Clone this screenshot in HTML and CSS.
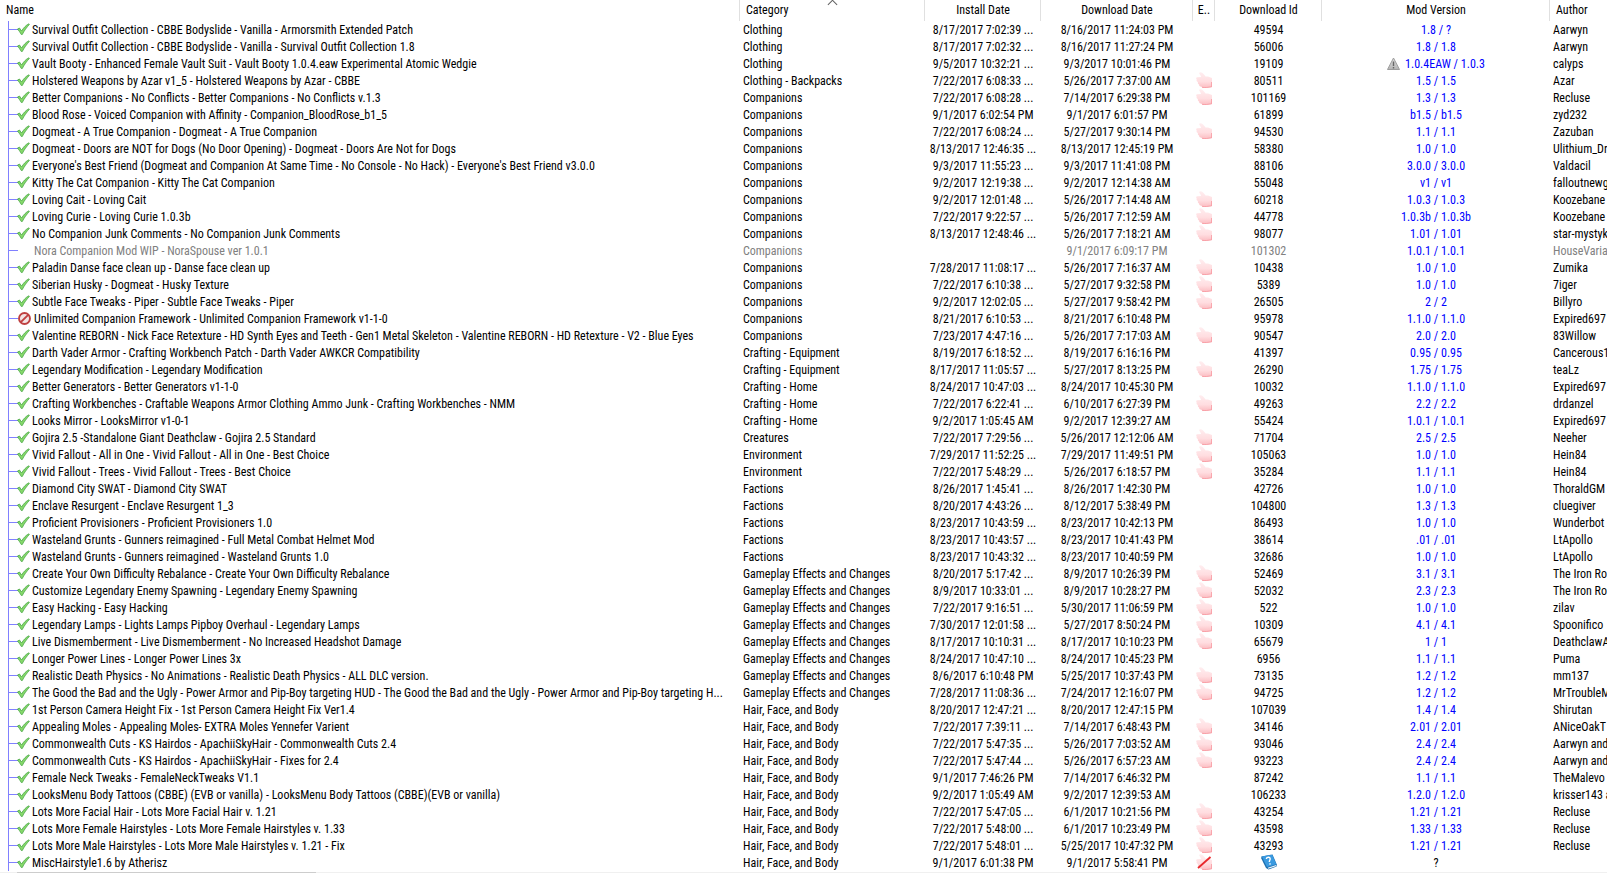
FILE: index.html
```
<!doctype html>
<html lang="en">
<head>
  <meta charset="UTF-8" />
  <meta name="viewport" content="width=device-width, initial-scale=1.0" />
  <title>Mods</title>
  <link rel="stylesheet" href="styles.css">
</head>
<body>

<svg class="sprite" aria-hidden="true">
  <defs>
    <linearGradient id="pink" x1="0" y1="0" x2="0" y2="1">
      <stop offset="0" stop-color="#ffeef0" />
      <stop offset="0.6" stop-color="#ffdde0" />
      <stop offset="1" stop-color="#fbbcc1" />
    </linearGradient>
    <linearGradient id="grey" x1="0" y1="0" x2="0" y2="1">
      <stop offset="0" stop-color="#e0e0e0" />
      <stop offset="1" stop-color="#b4b4b4" />
    </linearGradient>
  </defs>
  <symbol id="check" viewBox="0 0 13 13">
    <path d="M0.500,6 L2.500,5 L4.500,8 C6.500,5 9,2 12,0.800 L12.500,1.300 C10,4 7,8 5.300,11.500 L4.300,11.500 C3.300,9.500 2,8 0.500,6 z" fill="#86d86a" stroke="#3c9f3c" stroke-width="0.7" stroke-linejoin="round" />
  </symbol>
  <symbol id="ban" viewBox="0 0 13 13">
    <circle cx="6.500" cy="6.500" r="5.500" fill="#f3e4e4" stroke="#bf4040" stroke-width="1.900" />
    <path d="M2.800,10.200 L10.200,2.800" stroke="#bf4040" stroke-width="1.900" />
  </symbol>
  <symbol id="thumb" viewBox="0 0 16 16">
    <path d="M3,1 C3.500,0 5.500,0 6.500,1 C8,2.500 9,3.500 9.500,4.500 L12,4.500 L16,6 L16,15 L12,15.500 C9,16.200 6,16 5,14.500 C3.500,14.500 3,13.500 3.200,12.500 C2,12 1.500,11 2,10 C0.500,9.500 0.300,8.500 0.800,7.700 C-0.300,6.500 0.300,5.300 1.500,5.300 L5,5 C5,3.500 3.500,2.500 3,1 z" fill="url(#pink)" />
    <path d="M6,15.300 C9,16 12,15.300 15.600,14.800 L15.600,10" fill="none" stroke="#f8959d" stroke-width="0.8" />
  </symbol>
  <symbol id="nothumb" viewBox="0 0 16 16">
    <use href="#thumb" />
    <path d="M2,14 L14.500,3" stroke="#e8282c" stroke-width="1.800" />
  </symbol>
  <symbol id="warn" viewBox="0 0 13 13">
    <path d="M6.500,1 L12.500,12.500 L0.500,12.500 z" fill="url(#grey)" stroke="#9c9c9c" stroke-linejoin="round" />
    <path d="M6.500,4.500 L6.500,9 M6.500,10 L6.500,11.500" stroke="#666" stroke-width="1.400" />
  </symbol>
  <symbol id="book" viewBox="0 0 16 16">
    <path d="M0.300,2.500 L11.500,0.500 L16,11 L15.500,12.500 L7.500,15.500 L5,14 L0.300,4.500 z" fill="#1c6fb0" />
    <path d="M0.800,2.500 L11.200,0.800 L15.300,10.300 L6,13 z" fill="#3a9ae0" />
    <path d="M7,14.300 L15.300,11.500" stroke="#eef6fc" stroke-width="1.200" />
    <path d="M5.300,5 C5.500,2.800 9,2.600 9.200,4.700 C9.300,6 8.100,6.300 8.400,8 M8.800,9.300 L9.200,10.600" fill="none" stroke="#fff" stroke-width="1.400" />
  </symbol>
</svg>

<table class="mods">
  <colgroup>
    <col class="col-name"><col class="col-cat"><col class="col-inst"><col class="col-down">
    <col class="col-end"><col class="col-id"><col class="col-ver"><col class="col-auth">
  </colgroup>
  <thead>
    <tr>
      <th>Name</th>
      <th class="sorted">Category</th>
      <th class="mid">Install Date</th>
      <th class="mid">Download Date</th>
      <th class="mid">E..</th>
      <th class="mid">Download Id</th>
      <th class="mid">Mod Version</th>
      <th>Author</th>
    </tr>
  </thead>
  <tbody id="list"></tbody>
</table>
<div class="scroll"><div class="scroll-thumb"></div></div>

<script src="mods.js"></script>
</body>
</html>
```
FILE: styles.css
```
* {
  box-sizing: border-box;
}
body {
  margin: 0;
  background: #fff;
  color: #000;
  font: 12px/15px "Roboto Condensed", Roboto, sans-serif;
  overflow: hidden;
}
.sprite {
  position: absolute;
  width: 0;
  height: 0;
}
.mods {
  width: 100%;
  table-layout: fixed;
  border-collapse: collapse;
}
.col-cat { width: 185px; }
.col-inst { width: 116px; }
.col-down { width: 152px; }
.col-end { width: 22px; }
.col-id { width: 107px; }
.col-ver { width: 228px; }
.col-auth { width: 57px; }
th {
  position: relative;
  height: 21px;
  padding: 0 0 0 6px;
  font-weight: normal;
  text-align: left;
  white-space: nowrap;
  background: linear-gradient(#e0e0e0, #e0e0e0) right / 1px 100% no-repeat;
}
th:last-child {
  background: none;
}
th.mid {
  padding-left: 0;
  text-align: center;
}
/*Sort arrow*/
.sorted:after {
  content: '';
  position: absolute;
  top: 1px;
  left: 48%;
  width: 6px;
  height: 6px;
  border: solid #606060;
  border-width: 1px 0 0 1px;
  transform: rotate(45deg);
}
td {
  height: 17px;
  padding: 2px 0 0 3px;
  overflow: hidden;
  white-space: nowrap;
}
td.mid {
  padding-left: 0;
  text-align: center;
}
/*Tree lines*/
td.name {
  padding: 2px 3px 0 17px;
  text-overflow: ellipsis;
  background:
    linear-gradient(#8080ff, #8080ff) 8px 0 / 1px 100% no-repeat,
    linear-gradient(#8080ff, #8080ff) 8px 8px / 10px 1px no-repeat;
}
td svg {
  display: inline-block;
  vertical-align: top;
}
.check {
  width: 13px;
  height: 13px;
  margin-right: 2px;
}
.ban {
  width: 13px;
  height: 13px;
  margin: 0 3px 0 1px;
}
.none {
  display: inline-block;
  width: 17px;
}
.thumb,
.nothumb,
.book {
  width: 16px;
  height: 16px;
  margin-top: -2px;
}
.warn {
  width: 13px;
  height: 13px;
  margin-right: 5px;
}
.ver {
  color: #00f;
}
.unknown {
  color: #000;
}
.off {
  color: #808080;
}
.scroll {
  height: 2px;
  padding-top: 1px;
  background: #f0f0f0 content-box;
}
.scroll-thumb {
  width: 299px;
  height: 1px;
  margin-left: 17px;
  background: #cdcdcd;
}
```
FILE: mods.js
```
"use strict";
// name | category | installed | downloaded | endorsed | id | version | author
var mods = `Survival Outfit Collection - CBBE Bodyslide - Vanilla - Armorsmith Extended Patch|Clothing|8/17/2017 7:02:39 ...|8/16/2017 11:24:03 PM||49594|1.8 / ?|Aarwyn
Survival Outfit Collection - CBBE Bodyslide - Vanilla - Survival Outfit Collection 1.8|Clothing|8/17/2017 7:02:32 ...|8/16/2017 11:27:24 PM||56006|1.8 / 1.8|Aarwyn
Vault Booty - Enhanced Female Vault Suit - Vault Booty 1.0.4.eaw Experimental Atomic Wedgie|Clothing|9/5/2017 10:32:21 ...|9/3/2017 10:01:46 PM||19109|1.0.4EAW / 1.0.3|calyps
Holstered Weapons by Azar v1_5 - Holstered Weapons by Azar - CBBE|Clothing - Backpacks|7/22/2017 6:08:33 ...|5/26/2017 7:37:00 AM|y|80511|1.5 / 1.5|Azar
Better Companions - No Conflicts - Better Companions - No Conflicts v.1.3|Companions|7/22/2017 6:08:28 ...|7/14/2017 6:29:38 PM|y|101169|1.3 / 1.3|Recluse
Blood Rose - Voiced Companion with Affinity - Companion_BloodRose_b1_5|Companions|9/1/2017 6:02:54 PM|9/1/2017 6:01:57 PM||61899|b1.5 / b1.5|zyd232
Dogmeat - A True Companion - Dogmeat - A True Companion|Companions|7/22/2017 6:08:24 ...|5/27/2017 9:30:14 PM|y|94530|1.1 / 1.1|Zazuban
Dogmeat - Doors are NOT for Dogs (No Door Opening) - Dogmeat - Doors Are Not for Dogs|Companions|8/13/2017 12:46:35 ...|8/13/2017 12:45:19 PM||58380|1.0 / 1.0|Ulithium_Dr
Everyone's Best Friend (Dogmeat and Companion At Same Time - No Console - No Hack) - Everyone's Best Friend v3.0.0|Companions|9/3/2017 11:55:23 ...|9/3/2017 11:41:08 PM||88106|3.0.0 / 3.0.0|Valdacil
Kitty The Cat Companion - Kitty The Cat Companion|Companions|9/2/2017 12:19:38 ...|9/2/2017 12:14:38 AM||55048|v1 / v1|falloutnewg
Loving Cait - Loving Cait|Companions|9/2/2017 12:01:48 ...|5/26/2017 7:14:48 AM|y|60218|1.0.3 / 1.0.3|Koozebane
Loving Curie - Loving Curie 1.0.3b|Companions|7/22/2017 9:22:57 ...|5/26/2017 7:12:59 AM|y|44778|1.0.3b / 1.0.3b|Koozebane
No Companion Junk Comments - No Companion Junk Comments|Companions|8/13/2017 12:48:46 ...|5/26/2017 7:18:21 AM|y|98077|1.01 / 1.01|star-mystyk
Nora Companion Mod WIP - NoraSpouse ver 1.0.1|Companions||9/1/2017 6:09:17 PM||101302|1.0.1 / 1.0.1|HouseVaria
Paladin Danse face clean up - Danse face clean up|Companions|7/28/2017 11:08:17 ...|5/26/2017 7:16:37 AM|y|10438|1.0 / 1.0|Zumika
Siberian Husky - Dogmeat - Husky Texture|Companions|7/22/2017 6:10:38 ...|5/27/2017 9:32:58 PM|y|5389|1.0 / 1.0|7iger
Subtle Face Tweaks - Piper - Subtle Face Tweaks - Piper|Companions|9/2/2017 12:02:05 ...|5/27/2017 9:58:42 PM|y|26505|2 / 2|Billyro
Unlimited Companion Framework - Unlimited Companion Framework v1-1-0|Companions|8/21/2017 6:10:53 ...|8/21/2017 6:10:48 PM||95978|1.1.0 / 1.1.0|Expired697
Valentine REBORN - Nick Face Retexture - HD Synth Eyes and Teeth - Gen1 Metal Skeleton - Valentine REBORN - HD Retexture - V2 - Blue Eyes|Companions|7/23/2017 4:47:16 ...|5/26/2017 7:17:03 AM|y|90547|2.0 / 2.0|83Willow
Darth Vader Armor - Crafting Workbench Patch - Darth Vader AWKCR Compatibility|Crafting - Equipment|8/19/2017 6:18:52 ...|8/19/2017 6:16:16 PM||41397|0.95 / 0.95|Cancerous1
Legendary Modification - Legendary Modification|Crafting - Equipment|8/17/2017 11:05:57 ...|5/27/2017 8:13:25 PM|y|26290|1.75 / 1.75|teaLz
Better Generators - Better Generators v1-1-0|Crafting - Home|8/24/2017 10:47:03 ...|8/24/2017 10:45:30 PM||10032|1.1.0 / 1.1.0|Expired697
Crafting Workbenches - Craftable Weapons Armor Clothing Ammo Junk - Crafting Workbenches - NMM|Crafting - Home|7/22/2017 6:22:41 ...|6/10/2017 6:27:39 PM|y|49263|2.2 / 2.2|drdanzel
Looks Mirror - LooksMirror v1-0-1|Crafting - Home|9/2/2017 1:05:45 AM|9/2/2017 12:39:27 AM||55424|1.0.1 / 1.0.1|Expired697
Gojira 2.5 -Standalone Giant Deathclaw - Gojira 2.5 Standard|Creatures|7/22/2017 7:29:56 ...|5/26/2017 12:12:06 AM|y|71704|2.5 / 2.5|Neeher
Vivid Fallout - All in One - Vivid Fallout - All in One - Best Choice|Environment|7/29/2017 11:52:25 ...|7/29/2017 11:49:51 PM|y|105063|1.0 / 1.0|Hein84
Vivid Fallout - Trees - Vivid Fallout - Trees - Best Choice|Environment|7/22/2017 5:48:29 ...|5/26/2017 6:18:57 PM|y|35284|1.1 / 1.1|Hein84
Diamond City SWAT - Diamond City SWAT|Factions|8/26/2017 1:45:41 ...|8/26/2017 1:42:30 PM||42726|1.0 / 1.0|ThoraldGM
Enclave Resurgent - Enclave Resurgent 1_3|Factions|8/20/2017 4:43:26 ...|8/12/2017 5:38:49 PM||104800|1.3 / 1.3|cluegiver
Proficient Provisioners - Proficient Provisioners 1.0|Factions|8/23/2017 10:43:59 ...|8/23/2017 10:42:13 PM||86493|1.0 / 1.0|Wunderbot
Wasteland Grunts - Gunners reimagined - Full Metal Combat Helmet Mod|Factions|8/23/2017 10:43:57 ...|8/23/2017 10:41:43 PM||38614|.01 / .01|LtApollo
Wasteland Grunts - Gunners reimagined - Wasteland Grunts 1.0|Factions|8/23/2017 10:43:32 ...|8/23/2017 10:40:59 PM||32686|1.0 / 1.0|LtApollo
Create Your Own Difficulty Rebalance - Create Your Own Difficulty Rebalance|Gameplay Effects and Changes|8/20/2017 5:17:42 ...|8/9/2017 10:26:39 PM|y|52469|3.1 / 3.1|The Iron Ro
Customize Legendary Enemy Spawning - Legendary Enemy Spawning|Gameplay Effects and Changes|8/9/2017 10:33:01 ...|8/9/2017 10:28:27 PM|y|52032|2.3 / 2.3|The Iron Ro
Easy Hacking - Easy Hacking|Gameplay Effects and Changes|7/22/2017 9:16:51 ...|5/30/2017 11:06:59 PM|y|522|1.0 / 1.0|zilav
Legendary Lamps - Lights Lamps Pipboy Overhaul - Legendary Lamps|Gameplay Effects and Changes|7/30/2017 12:01:58 ...|5/27/2017 8:50:24 PM|y|10309|4.1 / 4.1|Spoonifico
Live Dismemberment - Live Dismemberment - No Increased Headshot Damage|Gameplay Effects and Changes|8/17/2017 10:10:31 ...|8/17/2017 10:10:23 PM|y|65679|1 / 1|DeathclawA
Longer Power Lines - Longer Power Lines 3x|Gameplay Effects and Changes|8/24/2017 10:47:10 ...|8/24/2017 10:45:23 PM||6956|1.1 / 1.1|Puma
Realistic Death Physics - No Animations - Realistic Death Physics - ALL DLC version.|Gameplay Effects and Changes|8/6/2017 6:10:48 PM|5/25/2017 10:37:43 PM|y|73135|1.2 / 1.2|mm137
The Good the Bad and the Ugly - Power Armor and Pip-Boy targeting HUD - The Good the Bad and the Ugly - Power Armor and Pip-Boy targeting H...|Gameplay Effects and Changes|7/28/2017 11:08:36 ...|7/24/2017 12:16:07 PM|y|94725|1.2 / 1.2|MrTroubleM
1st Person Camera Height Fix - 1st Person Camera Height Fix Ver1.4|Hair, Face, and Body|8/20/2017 12:47:21 ...|8/20/2017 12:47:15 PM||107039|1.4 / 1.4|Shirutan
Appealing Moles - Appealing Moles- EXTRA Moles Yennefer Varient|Hair, Face, and Body|7/22/2017 7:39:11 ...|7/14/2017 6:48:43 PM|y|34146|2.01 / 2.01|ANiceOakT
Commonwealth Cuts - KS Hairdos - ApachiiSkyHair - Commonwealth Cuts 2.4|Hair, Face, and Body|7/22/2017 5:47:35 ...|5/26/2017 7:03:52 AM|y|93046|2.4 / 2.4|Aarwyn and
Commonwealth Cuts - KS Hairdos - ApachiiSkyHair - Fixes for 2.4|Hair, Face, and Body|7/22/2017 5:47:44 ...|5/26/2017 6:57:23 AM|y|93223|2.4 / 2.4|Aarwyn and
Female Neck Tweaks - FemaleNeckTweaks V1.1|Hair, Face, and Body|9/1/2017 7:46:26 PM|7/14/2017 6:46:32 PM||87242|1.1 / 1.1|TheMalevo
LooksMenu Body Tattoos (CBBE) (EVB or vanilla) - LooksMenu Body Tattoos (CBBE)(EVB or vanilla)|Hair, Face, and Body|9/2/2017 1:05:49 AM|9/2/2017 12:39:53 AM||106233|1.2.0 / 1.2.0|krisser143 a
Lots More Facial Hair - Lots More Facial Hair v. 1.21|Hair, Face, and Body|7/22/2017 5:47:05 ...|6/1/2017 10:21:56 PM|y|43254|1.21 / 1.21|Recluse
Lots More Female Hairstyles - Lots More Female Hairstyles v. 1.33|Hair, Face, and Body|7/22/2017 5:48:00 ...|6/1/2017 10:23:49 PM|y|43598|1.33 / 1.33|Recluse
Lots More Male Hairstyles - Lots More Male Hairstyles v. 1.21 - Fix|Hair, Face, and Body|7/22/2017 5:48:01 ...|5/25/2017 10:47:32 PM|y|43293|1.21 / 1.21|Recluse
MiscHairstyle1.6 by Atherisz|Hair, Face, and Body|9/1/2017 6:01:38 PM|9/1/2017 5:58:41 PM|n||?|`;

function icon(name) {
  return '<svg class="' + name + '"><use href="#' + name + '"/></svg>';
}

function row(line) {
  var m = line.split('|'),
      off = m[2] === '',
      state = icon('check'),
      endorse = '';
  //Not installed
  if (off) {
    state = '<span class="none"></span>';
  }
  //Installed but switched off
  if (m[5] === '95978') {
    state = icon('ban');
  }
  if (m[4]) {
    endorse = icon(m[4] === 'y' ? 'thumb' : 'nothumb');
  }
  return '<tr' + (off ? ' class="off"' : '') + '>' +
    '<td class="name">' + state + m[0] + '</td>' +
    '<td>' + m[1] + '</td>' +
    '<td class="mid">' + m[2] + '</td>' +
    '<td class="mid">' + m[3] + '</td>' +
    '<td class="mid">' + endorse + '</td>' +
    '<td class="mid">' + (m[5] || icon('book')) + '</td>' +
    '<td class="mid ver' + (m[6] === '?' ? ' unknown' : '') + '">' +
      (m[5] === '19109' ? icon('warn') : '') + m[6] + '</td>' +
    '<td>' + m[7] + '</td></tr>';
}

document.getElementById('list').innerHTML = mods.split('\n').map(row).join('');
```
